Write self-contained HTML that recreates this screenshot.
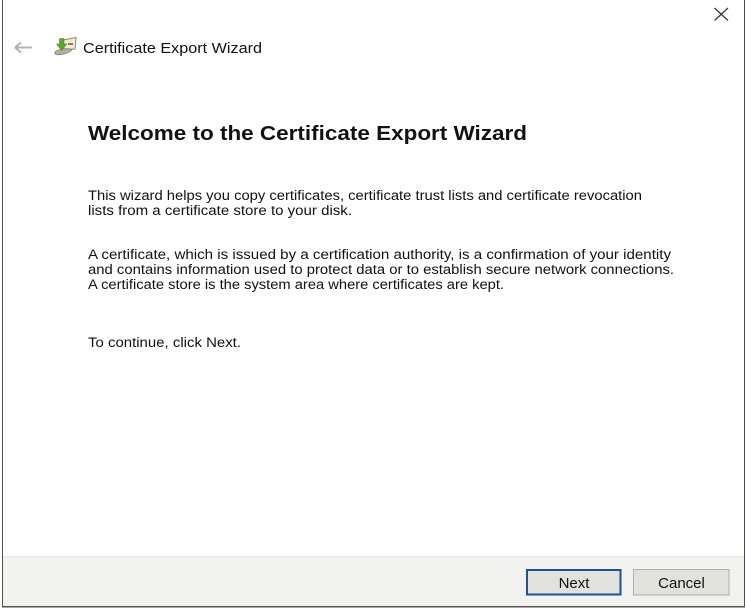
<!DOCTYPE html>
<html lang="en">
<head>
<meta charset="utf-8">
<title>Certificate Export Wizard</title>
<style>
html,body{margin:0;padding:0;background:#fff;}
body{width:746px;height:609px;overflow:hidden;position:relative;}
svg{position:absolute;left:0;top:0;display:block;}
text{font-family:"Liberation Sans",Arial,sans-serif;fill:#111;}
</style>
</head>
<body>
<svg width="746" height="609" viewBox="0 0 746 609" xmlns="http://www.w3.org/2000/svg">
  <rect width="746" height="609" fill="#fff"/>
  <!-- footer -->
  <rect x="3" y="557" width="741" height="50" fill="#f2f2ee"/>
  <rect x="3" y="556" width="741" height="2" fill="#ecece8"/>
  <!-- window borders -->
  <rect x="2" y="0" width="1" height="607" fill="#55524e"/>
  <rect x="744" y="0" width="1" height="607" fill="#55524e"/>
  <rect x="2" y="606" width="743" height="1.500" fill="#55524e"/>
  <!-- close -->
  <path d="M714.500 8L728 20.500M728 8L714.500 20.500" stroke="#333" stroke-width="1.200" fill="none"/>
  <!-- back arrow -->
  <path d="M15 47.500H32M15 47.500L21 42.500M15 47.500L21 52.500" stroke="#b4b4b4" stroke-width="2" fill="none"/>
  <!-- certificate icon -->
  <path d="M63 40L76 37.500L75 49L64 50Z" fill="#f3ecd0" stroke="#8f8a68" stroke-width="1"/>
  <rect x="68" y="43" width="5" height="2" fill="#7d7f62"/>
  <path d="M55 52C58 49 67 48 72 49.500C70 53 60 56 55 54Z" fill="#b0b1ad" stroke="#6f6f6b" stroke-width=".7"/>
  <path d="M59.500 38.500H64V44H67L61.500 50.500L56.500 44H59.500Z" fill="#5fa52e" stroke="#3f7d1c" stroke-width=".5"/>
  <!-- title -->
  <text x="83" y="53" font-size="15" textLength="179" lengthAdjust="spacingAndGlyphs" fill="#111">Certificate Export Wizard</text>
  <!-- heading -->
  <text x="88" y="140" font-size="20" font-weight="bold" textLength="439" lengthAdjust="spacingAndGlyphs" fill="#000">Welcome to the Certificate Export Wizard</text>
  <!-- body -->
  <g font-size="13.500">
    <text x="88" y="200" textLength="554" lengthAdjust="spacingAndGlyphs">This wizard helps you copy certificates, certificate trust lists and certificate revocation</text>
    <text x="88" y="215" textLength="264" lengthAdjust="spacingAndGlyphs">lists from a certificate store to your disk.</text>
    <text x="88" y="259" textLength="583" lengthAdjust="spacingAndGlyphs">A certificate, which is issued by a certification authority, is a confirmation of your identity</text>
    <text x="88" y="274" textLength="586" lengthAdjust="spacingAndGlyphs">and contains information used to protect data or to establish secure network connections.</text>
    <text x="88" y="289" textLength="416" lengthAdjust="spacingAndGlyphs">A certificate store is the system area where certificates are kept.</text>
    <text x="88" y="347" textLength="153" lengthAdjust="spacingAndGlyphs">To continue, click Next.</text>
  </g>
  <!-- buttons -->
  <rect x="527" y="570" width="93.500" height="24.500" fill="#e2e2dc" stroke="#1c4f9c" stroke-width="2"/>
  <text x="574" y="588" font-size="15" text-anchor="middle" fill="#111">Next</text>
  <rect x="633.500" y="569.500" width="95.500" height="25.500" fill="#e2e2dc" stroke="#b0b0aa" stroke-width="1"/>
  <text x="681.500" y="588" font-size="15" text-anchor="middle" fill="#111">Cancel</text>
</svg>
</body>
</html>
